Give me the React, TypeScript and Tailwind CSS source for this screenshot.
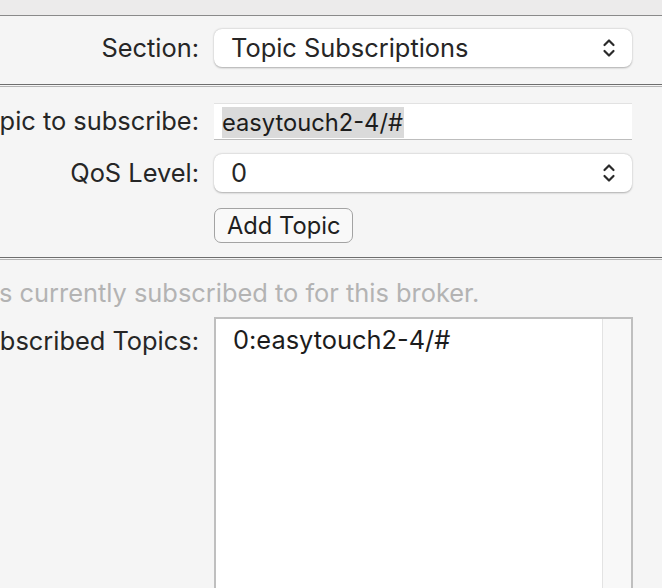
import React from 'react';

const font = { fontFamily: 'Inter, "Noto Sans", "Liberation Sans", sans-serif' };

const Chevrons: React.FC = () => (
  <svg width="14" height="22" viewBox="0 0 14 22" fill="none" stroke="#2a2a2a" strokeWidth="2.2" strokeLinecap="round" strokeLinejoin="round">
    <path d="M2.5 8 L7 3.5 L11.5 8" />
    <path d="M2.5 14 L7 18.5 L11.5 14" />
  </svg>
);

const Label: React.FC<{ text: string }> = ({ text }) => (
  <div className="w-[199px] shrink-0 flex justify-end overflow-hidden whitespace-nowrap text-[25.4px] text-[#262626]">
    <span className="shrink-0">{text}</span>
  </div>
);

const Popup: React.FC<{ value: string }> = ({ value }) => (
  <div className="w-[418px] h-[38px] rounded-[8px] bg-white flex items-center justify-between pl-[17px] pr-[16px] shadow-[0_0.5px_2px_rgba(0,0,0,0.3)] text-[25.4px] text-[#262626]">
    <span>{value}</span>
    <Chevrons />
  </div>
);

const Separator: React.FC = () => (
  <div className="flex flex-col">
    <div className="h-px bg-[#6e6e6e]" />
    <div className="h-px bg-[#f5f5f5]" />
    <div className="h-px bg-[#b4b4b4]" />
  </div>
);

export default function App() {
  return (
    <div className="w-[662px] h-[588px] overflow-hidden bg-[#f5f5f5] flex flex-col" style={font}>
      <div className="h-[16px] bg-[#ecebeb] border-b border-[#8a8a8a] shrink-0" />

      <div className="flex items-center gap-[15px] mt-[13px]">
        <Label text="Section:" />
        <Popup value="Topic Subscriptions" />
      </div>

      <div className="mt-[17px]">
        <Separator />
      </div>

      <div className="flex items-center gap-[15px] mt-[15px]">
        <Label text="Topic to subscribe:" />
        <div className="w-[418px] h-[37px] bg-white border-t border-[#e2e2e2] border-b border-b-[#bdbdbd] flex items-end pb-[1px] pl-[8px] text-[23.7px] text-[#1c1c1c]">
          <span className="bg-[#dadada] leading-[30px] pt-[1px] pr-[1px]">easytouch2-4/#</span>
        </div>
      </div>

      <div className="flex items-center gap-[15px] mt-[14px]">
        <Label text="QoS Level:" />
        <Popup value="0" />
      </div>

      <div className="flex gap-[15px] mt-[16px]">
        <div className="w-[199px] shrink-0" />
        <button className="h-[35px] px-[12px] rounded-[7px] border-[1.5px] border-[#a3a3a3] bg-[#f9f9f9] text-[23.7px] text-[#1f1f1f] leading-none">
          Add Topic
        </button>
      </div>

      <div className="mt-[14px]">
        <Separator />
      </div>

      <div className="mt-[18px] -ml-[1px] whitespace-nowrap text-[25.4px] text-[#b3b3b3] leading-[30px]">
        s currently subscribed to for this broker.
      </div>

      <div className="flex items-start gap-[15px] mt-[9px] flex-1">
        <div className="pt-[5px]">
          <Label text="Subscribed Topics:" />
        </div>
        <div className="w-[419px] h-[300px] border-2 border-[#bfbfbf] bg-white flex">
          <div className="flex-1 pl-[17px] pt-[2px] text-[25.4px] text-[#1c1c1c]">0:easytouch2-4/#</div>
          <div className="w-[29px] border-l border-[#e3e3e3] bg-[#f8f8f8]" />
        </div>
      </div>
    </div>
  );
}
